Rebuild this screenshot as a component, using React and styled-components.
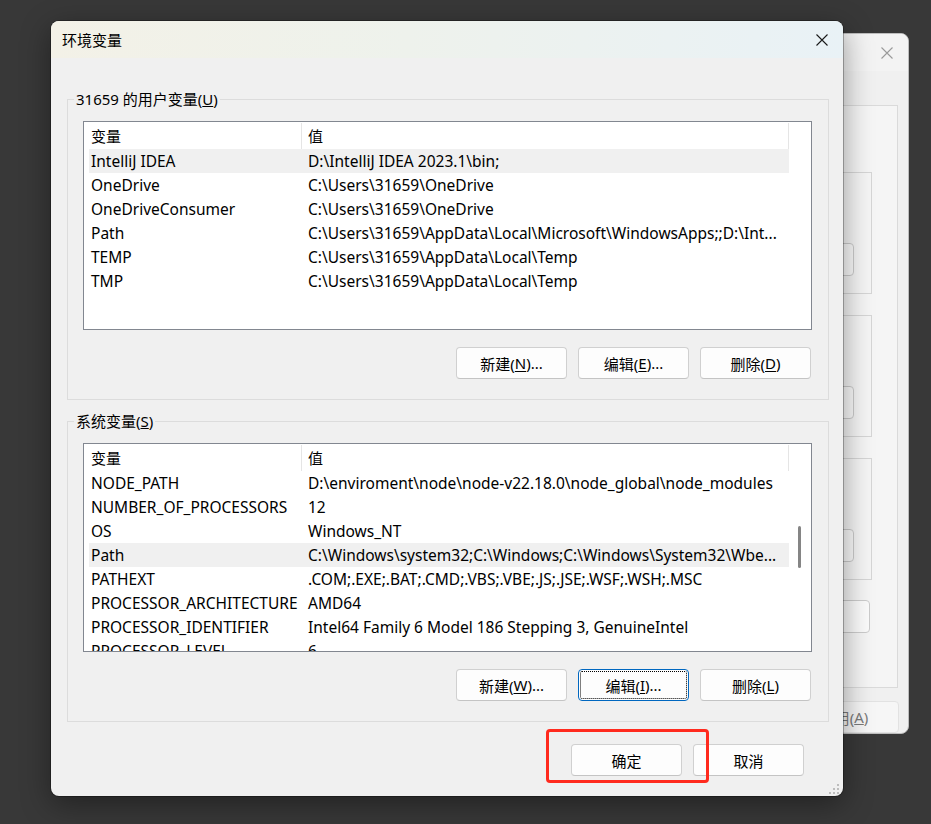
import React from 'react'
import styled, { createGlobalStyle } from 'styled-components'

const GlobalStyle = createGlobalStyle`
    body {
        margin: 0;
        font-family: "Noto Sans", "Noto Sans CJK SC", sans-serif;
        background: #383838;
    }
`

const userVars = [
    ['IntelliJ IDEA', 'D:\\IntelliJ IDEA 2023.1\\bin;'],
    ['OneDrive', 'C:\\Users\\31659\\OneDrive'],
    ['OneDriveConsumer', 'C:\\Users\\31659\\OneDrive'],
    ['Path', 'C:\\Users\\31659\\AppData\\Local\\Microsoft\\WindowsApps;;D:\\Int...'],
    ['TEMP', 'C:\\Users\\31659\\AppData\\Local\\Temp'],
    ['TMP', 'C:\\Users\\31659\\AppData\\Local\\Temp'],
]

const systemVars = [
    ['NODE_PATH', 'D:\\enviroment\\node\\node-v22.18.0\\node_global\\node_modules'],
    ['NUMBER_OF_PROCESSORS', '12'],
    ['OS', 'Windows_NT'],
    ['Path', 'C:\\Windows\\system32;C:\\Windows;C:\\Windows\\System32\\Wbe...'],
    ['PATHEXT', '.COM;.EXE;.BAT;.CMD;.VBS;.VBE;.JS;.JSE;.WSF;.WSH;.MSC'],
    ['PROCESSOR_ARCHITECTURE', 'AMD64'],
    ['PROCESSOR_IDENTIFIER', 'Intel64 Family 6 Model 186 Stepping 3, GenuineIntel'],
    ['PROCESSOR_LEVEL', '6'],
]

const CloseIcon = ({ color }) => (
    <svg width="12" height="12" viewBox="0 0 12 12">
        <path d="M0.5 0.5 L11.5 11.5 M11.5 0.5 L0.5 11.5" stroke={color} strokeWidth="1.1" fill="none" />
    </svg>
)

const Grip = () => (
    <GripBox width="12" height="12" viewBox="0 0 12 12">
        {[[9, 1], [5, 5], [9, 5], [1, 9], [5, 9], [9, 9]].map(([x, y]) => (
            <rect key={`${x}-${y}`} x={x} y={y} width="2" height="2" fill="#bdbdbd" />
        ))}
    </GripBox>
)

const VarList = ({ rows, selected, thumb }) => {
    return (
        <ListBox>
            <ListBody>
                <HeaderRow>
                    <HeaderCell $w={218}>变量</HeaderCell>
                    <HeaderCell $grow>值</HeaderCell>
                </HeaderRow>
                {rows.map(([name, value], i) => (
                    <Row key={name + i} $selected={i === selected}>
                        <NameCell>{name}</NameCell>
                        <ValueCell>{value}</ValueCell>
                    </Row>
                ))}
            </ListBody>
            <ScrollTrack>
                {thumb && <Thumb style={{ marginTop: thumb.top, height: thumb.height }} />}
            </ScrollTrack>
        </ListBox>
    )
}

const App = () => {
    return (
        <Desktop>
            <GlobalStyle />
            <BackWindow>
                <BackTitle>
                    <CloseBox>
                        <CloseIcon color="#9a9a9a" />
                    </CloseBox>
                </BackTitle>
                <BackTabs />
                <BackPanel>
                    <BackGroup><BackButton /></BackGroup>
                    <BackGroup><BackButton /></BackGroup>
                    <BackGroup><BackButton /></BackGroup>
                    <BackWideButton />
                </BackPanel>
                <BackFooter>
                    <BackApply>应用(<u>A</u>)</BackApply>
                </BackFooter>
            </BackWindow>

            <Window>
                <TitleBar>
                    <Title>环境变量</Title>
                    <CloseBox>
                        <CloseIcon color="#1a1a1a" />
                    </CloseBox>
                </TitleBar>
                <Body>
                    <Group>
                        <Legend>31659 的用户变量(<u>U</u>)</Legend>
                        <VarList rows={userVars} selected={0} />
                        <ButtonRow>
                            <Button>新建(<u>N</u>)...</Button>
                            <Button>编辑(<u>E</u>)...</Button>
                            <Button>删除(<u>D</u>)</Button>
                        </ButtonRow>
                    </Group>
                    <Group $gap>
                        <Legend>系统变量(<u>S</u>)</Legend>
                        <VarList rows={systemVars} selected={3} thumb={{ top: 82, height: 42 }} />
                        <ButtonRow>
                            <Button>新建(<u>W</u>)...</Button>
                            <Button $focused>编辑(<u>I</u>)...</Button>
                            <Button>删除(<u>L</u>)</Button>
                        </ButtonRow>
                    </Group>
                    <FooterRow>
                        <Button>确定</Button>
                        <Button>取消</Button>
                    </FooterRow>
                </Body>
                <Grip />
            </Window>

            <Highlight />
        </Desktop>
    )
}

export default App

const Desktop = styled.div`
    position: relative;
    width: 931px;
    height: 824px;
    overflow: hidden;
    background: #383838;
    font-size: 15px;
    color: #000;
`

const BackWindow = styled.div`
    position: absolute;
    left: 430px;
    top: 33px;
    width: 477px;
    height: 699px;
    border: 1px solid #bdbdbd;
    border-radius: 8px;
    background: #f0f0f0;
    overflow: hidden;
    display: flex;
    flex-direction: column;
`

const BackTitle = styled.div`
    height: 37px;
    background: #f3f3f3;
    display: flex;
    justify-content: flex-end;
`

const BackTabs = styled.div`
    height: 37px;
`

const BackPanel = styled.div`
    height: 567px;
    margin: 0 10px 0 12px;
    border: 1px solid #dadada;
    background: #f5f5f5;
    padding-top: 66px;
    display: flex;
    flex-direction: column;
    align-items: flex-end;
    gap: 21px;
`

const BackGroup = styled.div`
    width: 380px;
    height: 120px;
    margin-right: 25px;
    border: 1px solid #d6d6d6;
    display: flex;
    justify-content: flex-end;
    padding-right: 17px;
`

const BackButton = styled.div`
    width: 110px;
    height: 31px;
    margin-top: 70px;
    border: 1px solid #cccccc;
    border-radius: 4px;
    background: #fbfbfb;
`

const BackWideButton = styled.div`
    width: 200px;
    height: 31px;
    margin: -1px 27px 0 0;
    border: 1px solid #cccccc;
    border-radius: 4px;
    background: #fbfbfb;
`

const BackFooter = styled.div`
    display: flex;
    justify-content: flex-end;
    padding: 13px 9px 0 0;
`

const BackApply = styled.div`
    width: 108px;
    height: 30px;
    border: 1px solid #e2e2e2;
    border-radius: 4px;
    background: #f6f6f6;
    color: #7a7a7a;
    display: flex;
    align-items: center;
    justify-content: center;
    padding-left: 4px;
`

const Window = styled.div`
    position: absolute;
    left: 51px;
    top: 21px;
    width: 792px;
    height: 775px;
    border-radius: 8px;
    background: #f0f0f0;
    overflow: hidden;
    display: flex;
    flex-direction: column;
    box-shadow: 0 0 0 1px rgba(0, 0, 0, 0.28), 0 8px 30px rgba(0, 0, 0, 0.4);
`

const TitleBar = styled.div`
    height: 37px;
    flex-shrink: 0;
    display: flex;
    align-items: center;
    justify-content: space-between;
    padding-left: 11px;
    background: linear-gradient(90deg, #f3f1e7 0%, #eef2ec 45%, #e9f2f6 100%);
`

const Title = styled.div`
    font-size: 15px;
    line-height: 20px;
`

const CloseBox = styled.div`
    width: 42px;
    height: 37px;
    display: flex;
    align-items: center;
    justify-content: center;
`

const Body = styled.div`
    display: flex;
    flex-direction: column;
    padding: 31px 14px 0 16px;
`

const Group = styled.fieldset`
    margin: ${p => (p.$gap ? '11px' : '0')} 0 0 0;
    padding: 12px 16px 20px 15px;
    border: 1px solid #dcdcdc;
    min-width: 0;
    display: flex;
    flex-direction: column;
`

const Legend = styled.legend`
    margin-left: -9px;
    padding: 0 2px;
    line-height: 20px;
    font-size: 15px;
`

const ListBox = styled.div`
    height: 207px;
    border: 1px solid #828790;
    background: #fff;
    display: flex;
    overflow: hidden;
`

const ListBody = styled.div`
    flex: 1;
    min-width: 0;
    display: flex;
    flex-direction: column;
`

const HeaderRow = styled.div`
    height: 27px;
    flex-shrink: 0;
    display: flex;
`

const HeaderCell = styled.div`
    box-sizing: border-box;
    ${p => (p.$grow ? 'flex: 1;' : `width: ${p.$w}px; flex-shrink: 0;`)}
    padding-left: ${p => (p.$grow ? '6px' : '7px')};
    border-right: 1px solid #e5e5e5;
    margin-top: 1px;
    display: flex;
    align-items: center;
    line-height: 20px;
`

const Row = styled.div`
    height: 24px;
    flex-shrink: 0;
    margin-left: 5px;
    display: flex;
    align-items: center;
    background: ${p => (p.$selected ? '#f0f0f0' : 'transparent')};
    white-space: nowrap;
    font-size: 15.5px;
`

const NameCell = styled.div`
    box-sizing: border-box;
    width: 213px;
    padding-left: 2px;
    flex-shrink: 0;
    overflow: hidden;
`

const ValueCell = styled.div`
    flex: 1;
    min-width: 0;
    padding-left: 6px;
    overflow: hidden;
    text-overflow: ellipsis;
`

const ScrollTrack = styled.div`
    box-sizing: border-box;
    width: 22px;
    flex-shrink: 0;
    display: flex;
    flex-direction: column;
    padding-left: 9px;
`

const Thumb = styled.div`
    width: 3px;
    border-radius: 2px;
    background: #858585;
`

const ButtonRow = styled.div`
    display: flex;
    justify-content: flex-end;
    gap: 11px;
    margin-top: 17px;
    padding-right: 1px;
`

const FooterRow = styled.div`
    display: flex;
    justify-content: flex-end;
    gap: 11px;
    margin-top: 22px;
    padding-right: 25px;
`

const Button = styled.div`
    width: 111px;
    height: 32px;
    box-sizing: border-box;
    border: 1px solid ${p => (p.$focused ? '#0067c0' : '#d0d0d0')};
    border-bottom-color: ${p => (p.$focused ? '#0067c0' : '#c4c4c4')};
    border-radius: 4px;
    background: #fdfdfd;
    display: flex;
    align-items: center;
    justify-content: center;
    font-size: 15px;
    outline: ${p => (p.$focused ? '1px dotted #000' : 'none')};
    outline-offset: -3px;
    u {
        text-underline-offset: 2px;
    }
`

const GripBox = styled.svg`
    position: absolute;
    right: 3px;
    bottom: 1px;
`

const Highlight = styled.div`
    position: absolute;
    left: 546px;
    top: 729px;
    width: 157px;
    height: 48px;
    border: 3px solid #ff2a1e;
    border-radius: 4px;
    pointer-events: none;
`
